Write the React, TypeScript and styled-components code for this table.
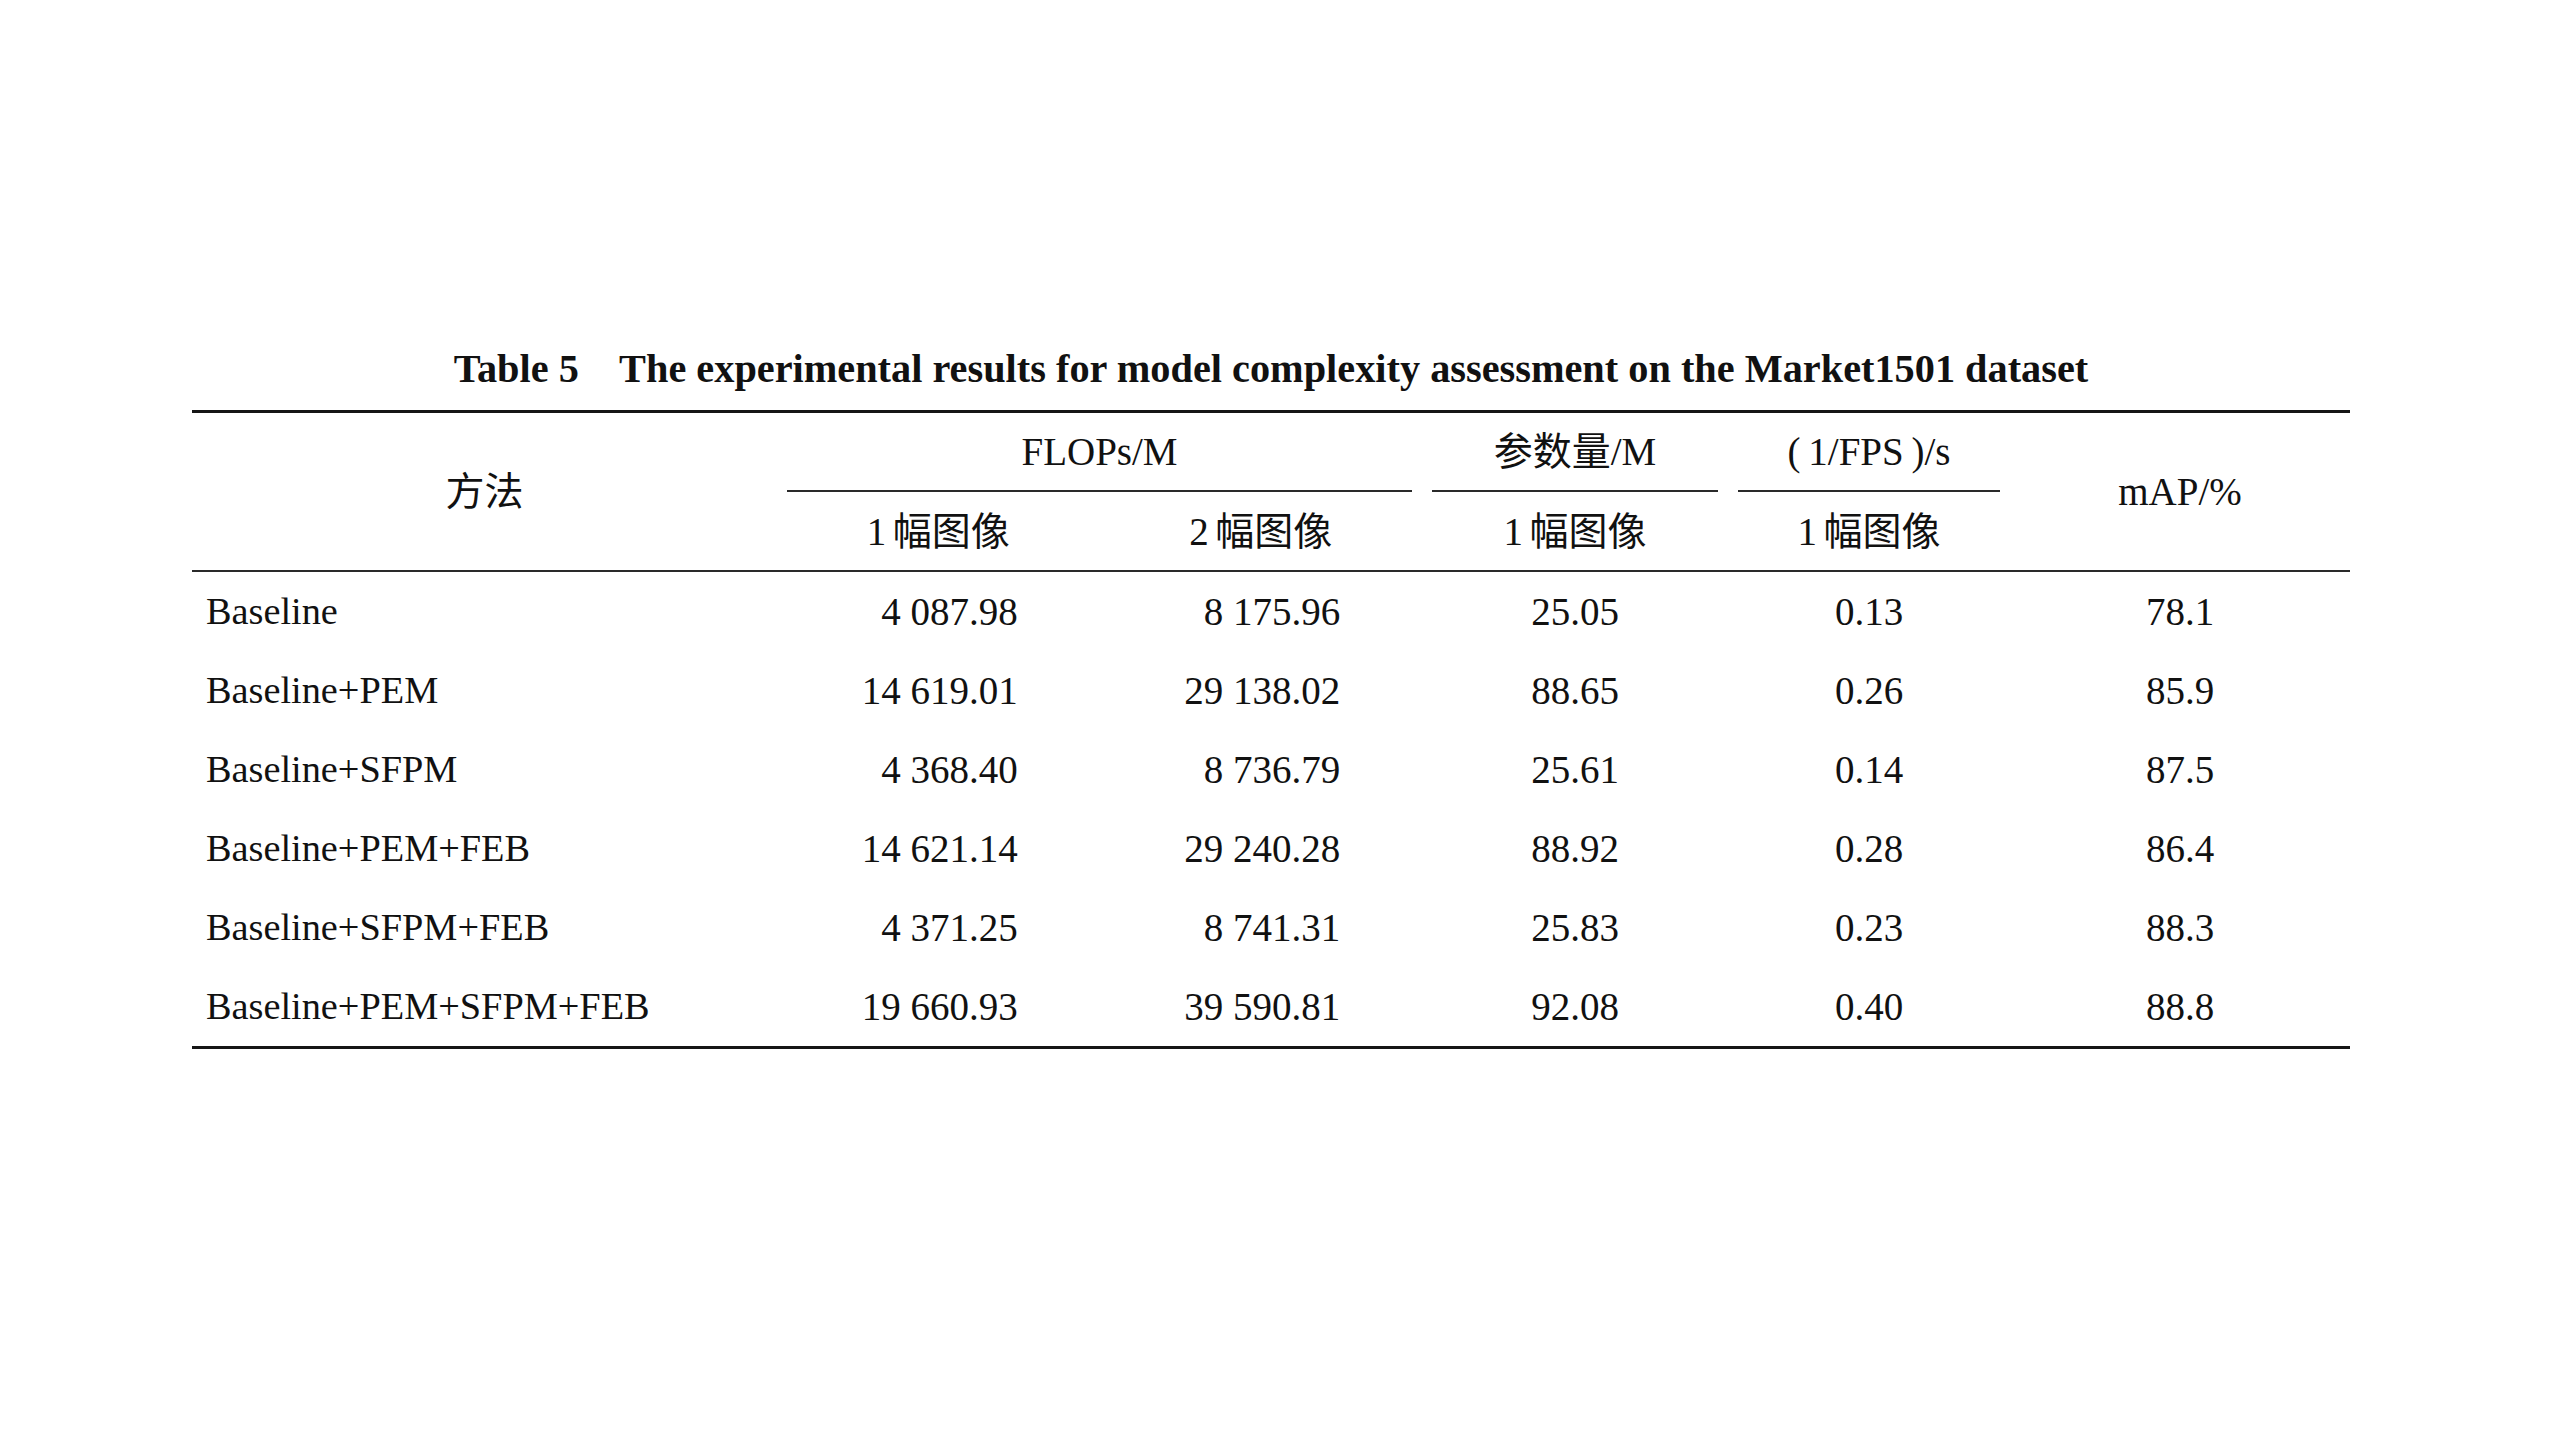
import styled, { createGlobalStyle } from "styled-components";

const enum Colors {
    Ink = "#111111",
    Rule = "#161616",
    SubRule = "#2a2a2a",
    Paper = "#ffffff",
}

// column widths of the printed table (method, FLOPs x2, params, 1/FPS, mAP)
const COLUMNS = "585px 322.5px 322.5px 306px 282px 340px";

type Row = {
    method: string;
    flops1: string;
    flops2: string;
    params: string;
    fps: string;
    map: string;
};

const rows: Row[] = [
    {method: "Baseline", flops1: "4 087.98", flops2: "8 175.96", params: "25.05", fps: "0.13", map: "78.1"},
    {method: "Baseline+PEM", flops1: "14 619.01", flops2: "29 138.02", params: "88.65", fps: "0.26", map: "85.9"},
    {method: "Baseline+SFPM", flops1: "4 368.40", flops2: "8 736.79", params: "25.61", fps: "0.14", map: "87.5"},
    {method: "Baseline+PEM+FEB", flops1: "14 621.14", flops2: "29 240.28", params: "88.92", fps: "0.28", map: "86.4"},
    {method: "Baseline+SFPM+FEB", flops1: "4 371.25", flops2: "8 741.31", params: "25.83", fps: "0.23", map: "88.3"},
    {method: "Baseline+PEM+SFPM+FEB", flops1: "19 660.93", flops2: "39 590.81", params: "92.08", fps: "0.40", map: "88.8"},
];

// keep the thousands gap from breaking
const nb = (s: string) => s.replace(/ /g, "\u00a0");

const App = () => {
    return (
        <>
            <GlobalStyle/>
            <Page>
                <Figure>
                    <Caption>Table 5{"\u2003"}The experimental results for model complexity assessment on the Market1501 dataset</Caption>
                    <Table>
                        <Head>
                            <HeadCell $row="1 / 3" $col="1">方法</HeadCell>
                            <HeadCell $row="1" $col="2 / 4">
                                <GroupLabel>FLOPs/M</GroupLabel>
                            </HeadCell>
                            <HeadCell $row="1" $col="4">
                                <GroupLabel>参数量/M</GroupLabel>
                            </HeadCell>
                            <HeadCell $row="1" $col="5">
                                <GroupLabel>({"\u2009"}1/FPS{"\u2009"})/s</GroupLabel>
                            </HeadCell>
                            <HeadCell $row="1 / 3" $col="6">mAP/%</HeadCell>
                            <HeadCell $row="2" $col="2">1{"\u2006"}幅图像</HeadCell>
                            <HeadCell $row="2" $col="3">2{"\u2006"}幅图像</HeadCell>
                            <HeadCell $row="2" $col="4">1{"\u2006"}幅图像</HeadCell>
                            <HeadCell $row="2" $col="5">1{"\u2006"}幅图像</HeadCell>
                        </Head>
                        <Body>
                            {rows.map((r) => (
                                <BodyRow key={r.method}>
                                    <MethodCell>{r.method}</MethodCell>
                                    <NumCell><NumBox>{nb(r.flops1)}</NumBox></NumCell>
                                    <NumCell><NumBox>{nb(r.flops2)}</NumBox></NumCell>
                                    <NumCell>{r.params}</NumCell>
                                    <NumCell>{r.fps}</NumCell>
                                    <NumCell>{r.map}</NumCell>
                                </BodyRow>
                            ))}
                        </Body>
                    </Table>
                </Figure>
            </Page>
        </>
    )
};

export default App;

const GlobalStyle = createGlobalStyle`
    html, body {
        margin: 0;
        padding: 0;
        background: ${Colors.Paper};
    }

    body {
        font-family: "Liberation Serif", "Noto Sans CJK SC", serif;
        color: ${Colors.Ink};
    }
`;

const Page = styled.div`
    width: 2560px;
    min-height: 1440px;
    box-sizing: border-box;
    padding: 349px 0 0 192px;
    display: flex;
    flex-direction: column;
    align-items: flex-start;
`;

const Figure = styled.div`
    width: 2158px;
    display: flex;
    flex-direction: column;
`;

const Caption = styled.div`
    font-weight: 700;
    font-size: 40.3px;
    line-height: 40px;
    text-align: center;
    white-space: nowrap;
    margin-bottom: 21px;
`;

const Table = styled.div`
    border-top: 3px solid ${Colors.Rule};
    border-bottom: 3px solid ${Colors.Rule};
    font-size: 39px;
    line-height: 1;
`;

const Head = styled.div`
    display: grid;
    grid-template-columns: ${COLUMNS};
    grid-template-rows: 79px 78px;
    border-bottom: 2px solid ${Colors.SubRule};
`;

const HeadCell = styled.div<{ $row: string, $col: string }>`
    grid-row: ${(props) => props.$row};
    grid-column: ${(props) => props.$col};
    display: flex;
    align-items: center;
    justify-content: center;
    white-space: nowrap;
`;

const GroupLabel = styled.div`
    flex: 1;
    align-self: stretch;
    margin: 0 10px;
    display: flex;
    align-items: center;
    justify-content: center;
    border-bottom: 2px solid ${Colors.SubRule};
`;

const Body = styled.div`
    display: flex;
    flex-direction: column;
`;

const BodyRow = styled.div`
    display: grid;
    grid-template-columns: ${COLUMNS};
    height: 79px;
`;

const MethodCell = styled.div`
    display: flex;
    align-items: center;
    padding-left: 14px;
    font-size: 38.3px;
    white-space: nowrap;
`;

const NumCell = styled.div`
    display: flex;
    align-items: center;
    justify-content: center;
    white-space: nowrap;
`;

const NumBox = styled.span`
    display: inline-block;
    width: 156px;
    padding-left: 3px;
    text-align: right;
`;
